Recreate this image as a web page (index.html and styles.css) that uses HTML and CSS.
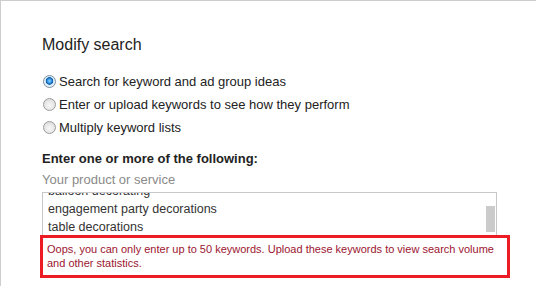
FILE: index.html
```html
<!DOCTYPE html>
<html lang="en">
<head>
  <meta charset="UTF-8" />
  <title>Modify search</title>
  <link rel="stylesheet" href="styles.css">
</head>
<body>
  <div class="panel">
    <h2>Modify search</h2>

    <div class="options">
      <label class="option"><span class="radio checked"></span>Search for keyword and ad group ideas</label>
      <label class="option"><span class="radio"></span>Enter or upload keywords to see how they perform</label>
      <label class="option"><span class="radio"></span>Multiply keyword lists</label>
    </div>

    <div class="field-title">Enter one or more of the following:</div>
    <div class="field-hint">Your product or service</div>

    <div class="keywords">
      <div class="keyword-lines">
        <div>balloon decorating</div>
        <div>engagement party decorations</div>
        <div>table decorations</div>
      </div>
      <span class="thumb"></span>
    </div>

    <div class="error">Oops, you can only enter up to 50 keywords. Upload these keywords to view search volume and other statistics.</div>
  </div>
</body>
</html>
```

FILE: styles.css
```css
body {
  margin: 0;
  font-family: "Liberation Sans", Arial, sans-serif;
  background: #fff;
  color: #222;
}
.panel {
  border-top: 1px solid #cdcdcd;
  border-left: 1px solid #cdcdcd;
  padding: 34px 0 0 41px;
  box-sizing: border-box;
  height: 286px;
}
h2 {
  margin: 0 0 16px;
  font-size: 16px;
  line-height: 19px;
  font-weight: normal;
  color: #222;
}
.options {
  display: flex;
  flex-direction: column;
}
.option {
  display: flex;
  align-items: center;
  height: 23px;
  font-size: 13px;
}
.radio {
  width: 13px;
  height: 13px;
  margin: 0 3px 0 1px;
  border-radius: 50%;
  box-sizing: border-box;
  border: 1px solid #9c9c9c;
  background: radial-gradient(circle at 50% 60%, #f7f7f7 0%, #e6e6e6 55%, #cfcfcf 100%);
}
.radio.checked {
  border-color: #7b8ea0;
  background: radial-gradient(circle at 50% 45%, #8fd4ff 0%, #2b8fe0 28%, #10549e 42%, #d7ecfa 50%, #eaf4fb 75%, #c7d6e2 100%);
}
.field-title {
  margin-top: 10px;
  font-size: 13px;
  line-height: 20px;
  font-weight: bold;
}
.field-hint {
  margin-top: 1px;
  font-size: 13px;
  line-height: 20px;
  color: #8a8a8a;
}
.keywords {
  position: relative;
  width: 455px;
  height: 43px;
  margin-top: 2px;
  box-sizing: border-box;
  border: 1px solid #c8c8c8;
  border-bottom: none;
  overflow: hidden;
  font-size: 12.5px;
  line-height: 18px;
  color: #333;
}
.keyword-lines {
  margin-top: -11px;
  padding-left: 5px;
}
.thumb {
  position: absolute;
  right: 1px;
  top: 13px;
  width: 9px;
  height: 26px;
  background: #cbcbcb;
}
.error {
  width: 470px;
  margin-left: -2px;
  box-sizing: border-box;
  border: 3px solid #ed1c24;
  padding: 4px 4px 5px 4px;
  font-size: 11px;
  line-height: 14px;
  color: #9c1530;
  background: #fff;
}
```
